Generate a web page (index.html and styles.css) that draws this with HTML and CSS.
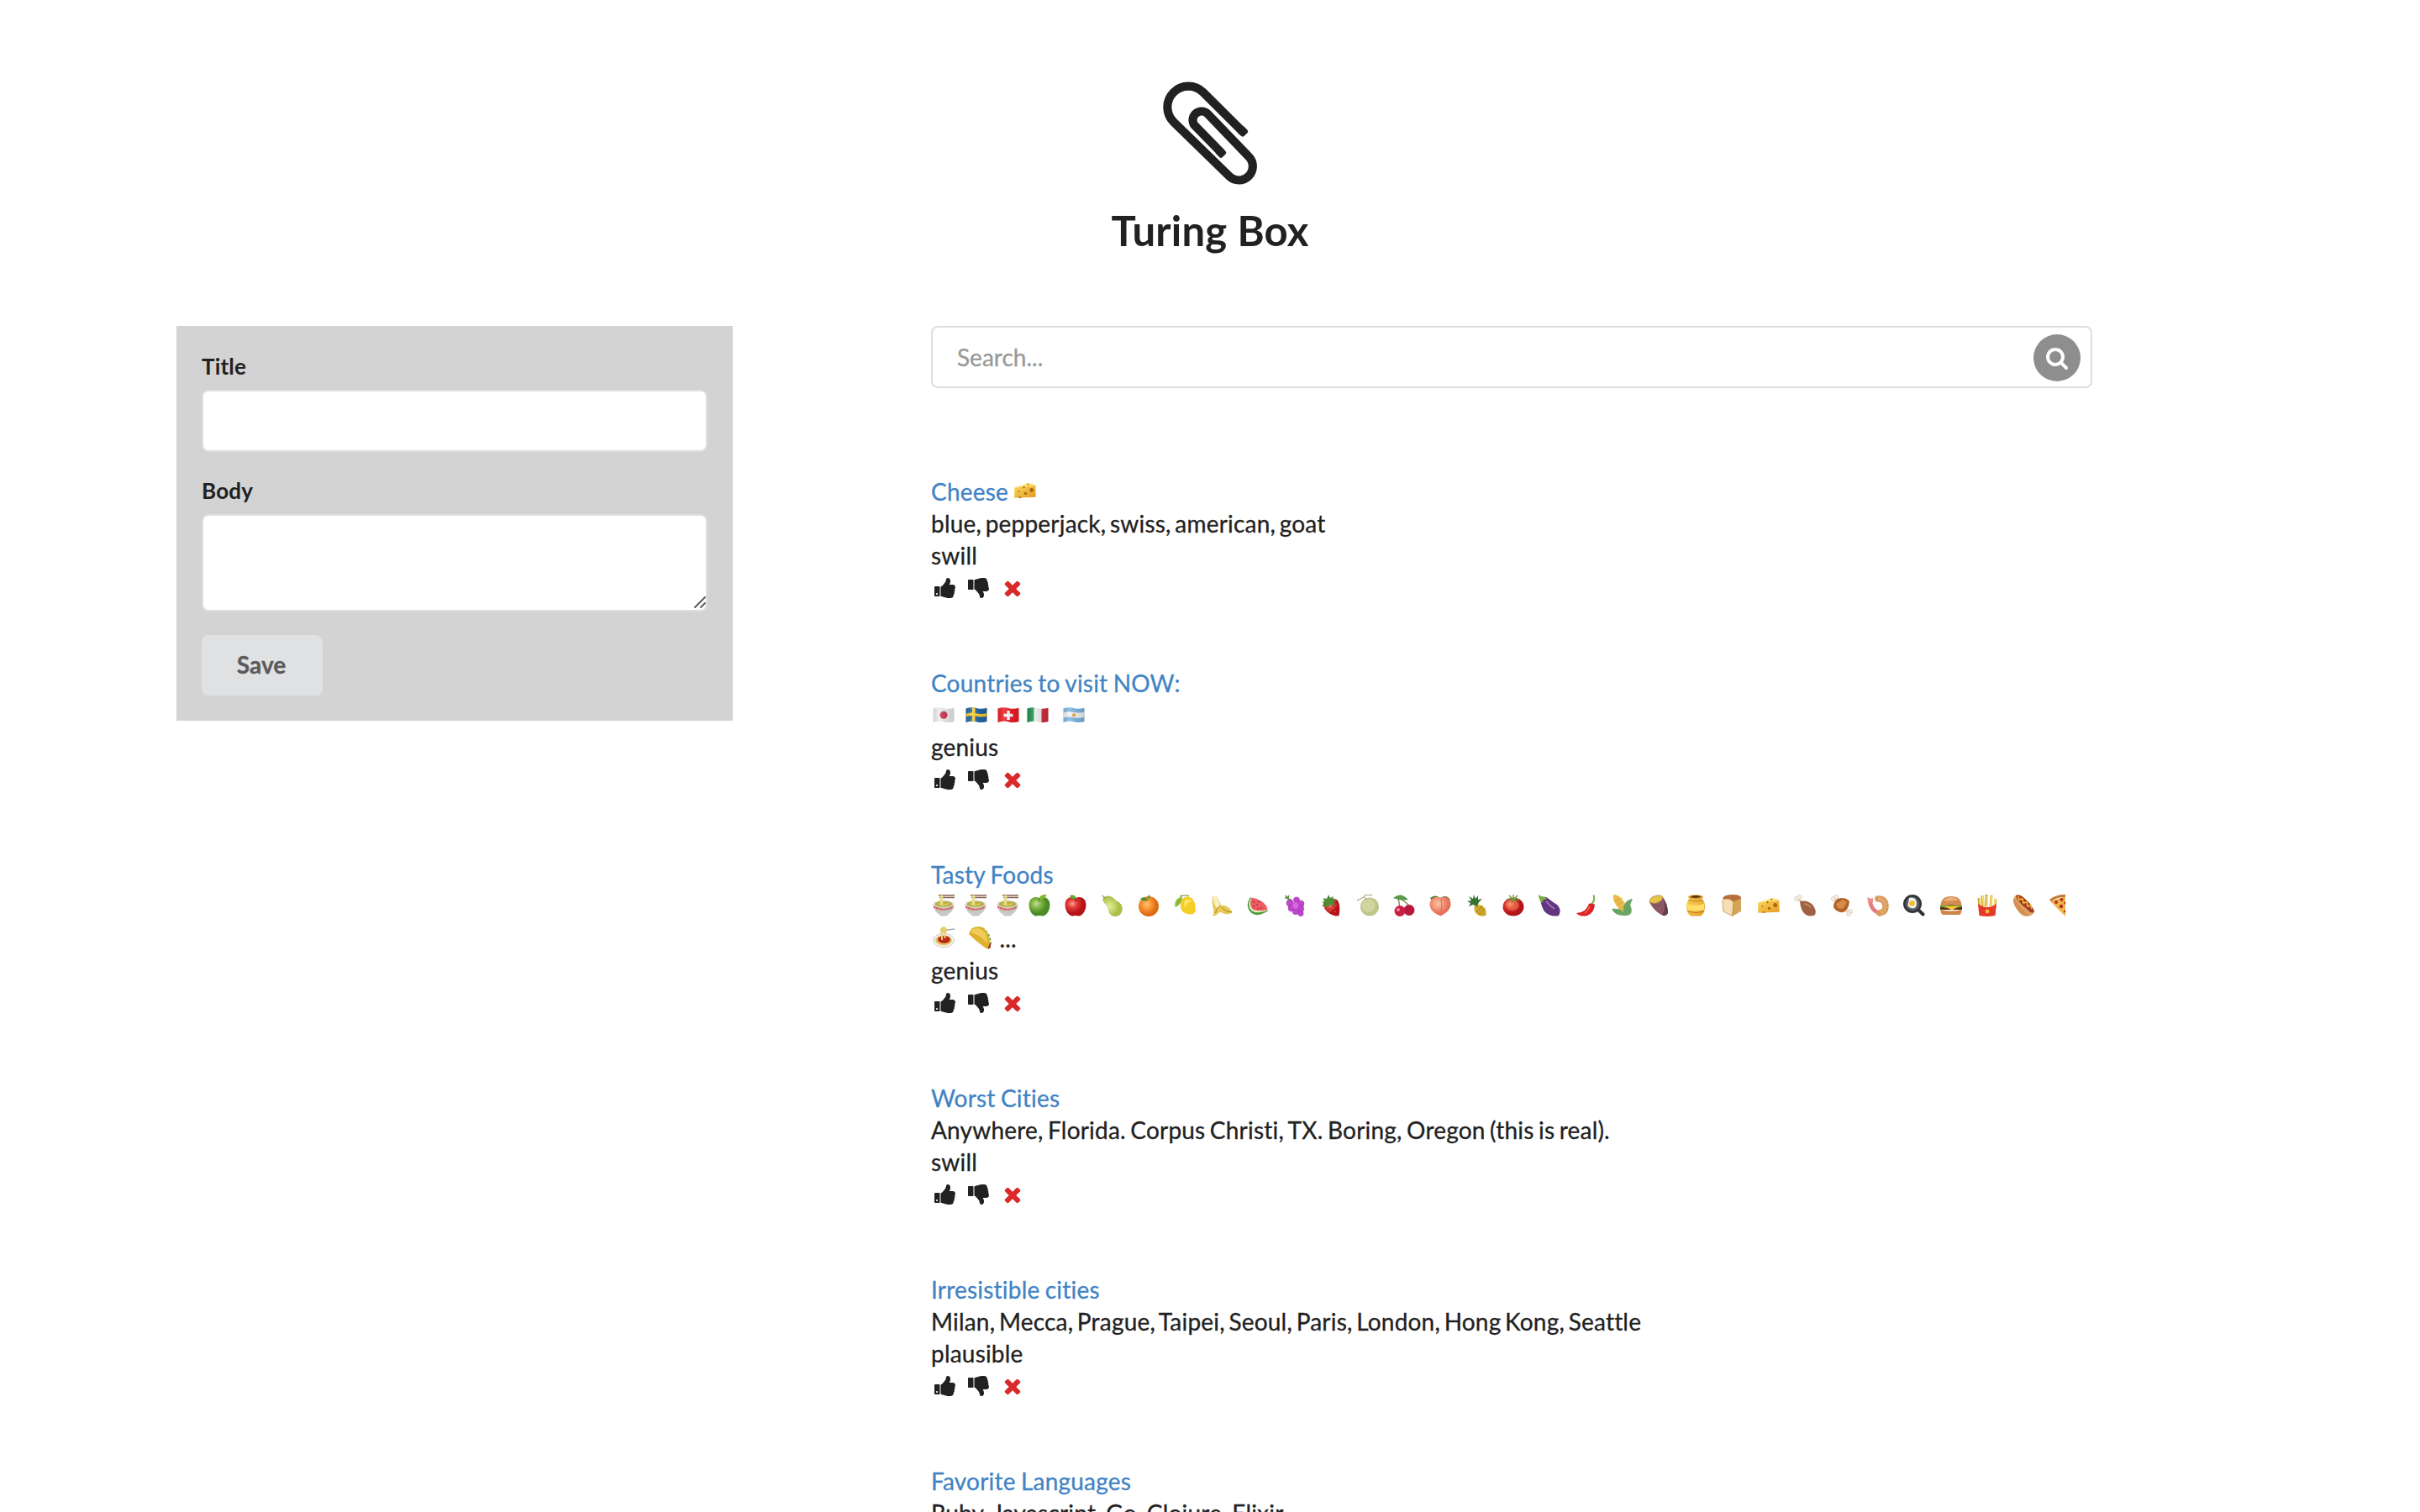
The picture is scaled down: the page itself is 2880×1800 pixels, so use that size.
FILE: index.html
```html
<!DOCTYPE html>
<html lang="en">
<head>
<meta charset="utf-8">
<title>Turing Box</title>
<link rel="stylesheet" href="styles.css">
</head>
<body>
<svg class="defs" aria-hidden="true">
  <defs>
    <linearGradient id="gold" x1="0" x2="1" y1="0" y2="1"><stop offset="0" stop-color="#fbd75c"/><stop offset="1" stop-color="#e39a23"/></linearGradient>
    <radialGradient id="green" cx=".35" cy=".35"><stop offset="0" stop-color="#c3dd94"/><stop offset=".5" stop-color="#7cb342"/><stop offset="1" stop-color="#4c8a26"/></radialGradient>
    <radialGradient id="red" cx=".35" cy=".35"><stop offset="0" stop-color="#ff9d92"/><stop offset=".45" stop-color="#e23b35"/><stop offset="1" stop-color="#b31319"/></radialGradient>
    <radialGradient id="lime" cx=".35" cy=".5"><stop offset="0" stop-color="#e6ee9a"/><stop offset="1" stop-color="#a9bf46"/></radialGradient>
    <radialGradient id="orange" cx=".4" cy=".4"><stop offset="0" stop-color="#ffc078"/><stop offset=".5" stop-color="#fb9430"/><stop offset="1" stop-color="#dc6b15"/></radialGradient>
    <radialGradient id="peach-fill" cx=".4" cy=".35"><stop offset="0" stop-color="#fdc4a2"/><stop offset="1" stop-color="#e8705a"/></radialGradient>
    <linearGradient id="flag-shade" x1="0" x2="1"><stop offset="0" stop-color="#000" stop-opacity=".12"/><stop offset=".3" stop-color="#fff" stop-opacity=".15"/><stop offset=".65" stop-color="#000" stop-opacity=".08"/><stop offset="1" stop-color="#000" stop-opacity=".16"/></linearGradient>
    <clipPath id="wave"><path d="M.5 1.5Q7 -.8 13 1T25.500.8V17Q19 19 13 17.200T.5 18z"/></clipPath>
  </defs>

  <symbol id="thumbs-up" viewBox="0 0 1792 1792"><path d="M256 1344q0-26-19-45t-45-19-45 19-19 45 19 45 45 19 45-19 19-45zm160-512v640q0 26-19 45t-45 19h-288q-26 0-45-19t-19-45v-640q0-26 19-45t45-19h288q26 0 45 19t19 45zm1184 0q0 86-55 149 15 44 15 76 3 76-43 137 17 56 0 117-15 57-54 94 9 112-49 181-64 76-197 78h-129q-66 0-144-15.500t-121.500-29-120.500-39.500q-123-43-158-44-26-1-45-19.500t-19-44.500v-641q0-25 18-43.500t43-20.500q24-2 76-59t101-121q68-87 101-120 18-18 31-48t17.500-48.500 13.500-60.500q7-39 12.500-61t19.500-52 34-50q19-19 45-19 46 0 82.500 10.500t60 26 40 40.500 24 45 12 50 5 45 .5 39q0 38-9.500 76t-19 60-27.500 56q-3 6-10 18t-11 22-8 24h277q78 0 135 57t57 135z"/></symbol>
  <symbol id="thumbs-down" viewBox="0 0 1792 1792"><path d="M256 448q0-26-19-45t-45-19-45 19-19 45 19 45 45 19 45-19 19-45zm160 512v-640q0-26-19-45t-45-19h-288q-26 0-45 19t-19 45v640q0 26 19 45t45 19h288q26 0 45-19t19-45zm1129-149q55 61 55 149-1 78-57.500 135t-134.500 57h-277q4 14 8 24t11 22 10 18q18 37 27 57t19 58.500 10 76.500q0 24-.5 39t-5 45-12 50-24 45-40 40.500-60 26-82.500 10.500q-26 0-45-19-20-20-34-50t-19.500-52-12.500-61q-9-42-13.500-60.500t-17.500-48.500-31-48q-33-33-101-120-49-64-101-121t-76-59q-25-2-43-20.500t-18-43.500v-641q0-26 19-44.500t45-19.500q35-1 158-44 77-26 120.500-39.500t121.500-29 144-15.500h129q133 2 197 78 58 69 49 181 39 37 54 94 17 61 0 117 46 61 43 137 0 32-15 76z"/></symbol>
  <symbol id="remove" viewBox="0 0 1792 1792"><path d="M1490 1322q0 40-28 68l-136 136q-28 28-68 28t-68-28l-294-294-294 294q-28 28-68 28t-68-28l-136-136q-28-28-28-68t28-68l294-294-294-294q-28-28-28-68t28-68l136-136q28-28 68-28t68 28l294 294 294-294q28-28 68-28t68 28l136 136q28 28 28 68t-28 68l-294 294 294 294q28 28 28 68z"/></symbol>

  <symbol id="jp" viewBox="0 0 26 19"><g clip-path="url(#wave)"><path fill="#eee" d="M0 0h26v19H0z"/><circle cx="13" cy="9.300" r="4.500" fill="#d3385a"/><path fill="url(#flag-shade)" d="M0 0h26v19H0z"/></g></symbol>
  <symbol id="se" viewBox="0 0 26 19"><g clip-path="url(#wave)"><path fill="#2667a5" d="M0 0h26v19H0z"/><path fill="#fbd02f" d="M8 0h3.500v19H8zM0 8q7-2.500 13-.8T26 7v3.500q-7 2-13 .3T0 11.500z"/><path fill="url(#flag-shade)" d="M0 0h26v19H0z"/></g></symbol>
  <symbol id="ch" viewBox="0 0 26 19"><g clip-path="url(#wave)"><path fill="#ee1f27" d="M0 0h26v19H0z"/><path fill="#fff" d="M11.300 4h3.500v3.700h3.700v3.500h-3.700v3.700h-3.500v-3.700H7.600V7.700h3.700z"/><path fill="url(#flag-shade)" d="M0 0h26v19H0z"/></g></symbol>
  <symbol id="it" viewBox="0 0 26 19"><g clip-path="url(#wave)"><path fill="#f2f2f2" d="M0 0h26v19H0z"/><path fill="#1d9150" d="M0 0h8.500v19H0z"/><path fill="#d4303f" d="M17.500 0H26v19h-8.500z"/><path fill="url(#flag-shade)" d="M0 0h26v19H0z"/></g></symbol>
  <symbol id="ar" viewBox="0 0 26 19"><g clip-path="url(#wave)"><path fill="#7fb9e6" d="M0 0h26v19H0z"/><path fill="#f5f5f5" d="M0 6.500q7-2 13-.7t13-.3v6q-7 2-13 .7T0 12.500z"/><circle cx="13" cy="9.200" r="2" fill="#e9a93a"/><path fill="url(#flag-shade)" d="M0 0h26v19H0z"/></g></symbol>

  <symbol id="cheese" viewBox="0 0 27 26"><path fill="#fbe27a" d="M0 9.500L16 4q7-.5 10.500 3L2 12z"/><path fill="url(#gold)" d="M.3 9.500L26.500 6.800V21L.3 22z"/><g fill="#a9640f"><circle cx="21.500" cy="12.500" r="2.500"/><circle cx="14" cy="16.500" r="1.600"/><circle cx="5.500" cy="14" r=".9"/><circle cx="12" cy="9" r="1.200"/><path d="M5 22q2.500-3.500 4.500-.2z"/><circle cx="17" cy="5.500" r="1"/></g></symbol>
  <symbol id="ramen" viewBox="0 0 26 26"><path stroke="#8a5f52" stroke-width="1.400" d="M7 1h19M8 3.500h18"/><ellipse cx="13" cy="11.500" rx="12.500" ry="4.800" fill="#e2e2e2"/><path fill="#c8c8c8" d="M.5 11.500C1 19 6 23 8 23.500v1.500q5 1 10 0v-1.500c2-.5 7-4.500 7.500-12q-12.500 8-25 0z"/><path fill="none" stroke="#d95a48" stroke-width="2.200" stroke-dasharray="2 .6" d="M1.500 14.500q11.500 6.500 23 0"/><ellipse cx="13" cy="11.300" rx="10.500" ry="3.500" fill="#bdb03e"/><path fill="none" stroke="#e6db88" stroke-width="3.500" d="M10.500 12V1"/><path fill="none" stroke="#e6db88" d="M7 11q6 3 12-.5"/></symbol>
  <symbol id="green-apple" viewBox="0 0 26 26"><path fill="url(#green)" d="M13 4.500C17 1 25.500 3.500 25.500 12c0 8-5 13.500-8.500 13.500-2 0-2-.6-4-.6s-2 .6-4 .6C5.500 25.500.5 20 .5 12 .5 3.500 9 1 13 4.500z"/><path fill="#83b92d" d="M12.500 5q1-5.500 9-5-1 6-9 5z"/><path stroke="#54702a" d="M13 8L12 4"/></symbol>
  <symbol id="apple" viewBox="0 0 26 26"><path fill="url(#red)" d="M13 4.500C17 1 25.500 3.500 25.500 12c0 8-5 13.500-8.500 13.500-2 0-2-.6-4-.6s-2 .6-4 .6C5.500 25.500.5 20 .5 12 .5 3.500 9 1 13 4.500z"/><path fill="#5cae30" d="M14 5.500Q7.500 6 6 1q7-2 8 4.500z"/><path stroke="#593119" d="M13.500 8L12.500 4"/></symbol>
  <symbol id="pear" viewBox="0 0 26 26"><path fill="url(#lime)" stroke="#9db13f" stroke-width=".5" d="M1.500 5Q3 1.500 9 2q5 1 8 5.500 7.500 2.500 7.500 10Q23.500 25.700 15.500 25.700 9 25 8.500 18 8.500 14 4.500 11 1.500 8 1.500 5z"/><path stroke="#806131" fill="none" d="M4 4L.5.8"/></symbol>
  <symbol id="tangerine" viewBox="0 0 26 26"><circle cx="13" cy="14" r="12" fill="url(#orange)"/><path fill="#4d9138" d="M11 6q1-4.500 3-6 2 3-3 6zM12 6.500Q7 9.500 3 5q5-4 9 1.500z"/></symbol>
  <symbol id="lemon" viewBox="0 0 26 26"><path fill="#f5cd26" d="M9 5Q14 1 20 4q5 5 4.500 12l.5 4-3 3q-7 1.500-12-2Q4 14 9 5z"/><path fill="#fce76a" d="M12 7q5-3 8 1-6 1-7 8-3-4-1-9z"/><path fill="#8cb934" d="M9 2Q-1 5 .5 15 9 12 9 2z"/><path fill="none" stroke="#5e8d23" stroke-width="1.200" d="M6 2q8-2 11 0"/></symbol>
  <symbol id="banana" viewBox="0 0 26 26"><path fill="#e6c955" d="M2 2l5 0q4 6 5 11 7-2 14 8-6 4-12 1-3-2-5 0-3 4-7 3.500 2-3 1-9Q1 11 2 2z"/><path fill="#f8efc0" d="M2.500 2Q3 11 7 16l4.500-2Q9 5 6 1.500z"/><path fill="none" stroke="#a8832b" d="M12 13q-5 2-6.500 9M13 15q3 5 12 6"/></symbol>
  <symbol id="watermelon" viewBox="0 0 26 26"><path fill="#4d9d3f" d="M4 3Q-2 12 3 19.500 11 29 25.500 19z"/><path fill="#eef0ca" d="M5 3.500Q0 12 4.500 18T25 18.500z"/><path fill="#ef5b62" d="M5.500 3.500Q2.500 12 6 16.500T24.500 18q-1-6-7-10t-12-4.500z"/><g fill="#69282d"><circle cx="8" cy="9" r=".8"/><circle cx="8" cy="14" r=".8"/><circle cx="12" cy="12" r=".8"/><circle cx="13" cy="17" r=".8"/><circle cx="17" cy="16" r=".8"/><circle cx="14" cy="8.500" r=".8"/></g></symbol>
  <symbol id="grapes" viewBox="0 0 26 26"><path stroke="#5c9338" stroke-width="1.600" fill="none" d="M2 1l3 4 5 2M6 1L4 5M1 4h5"/><g fill="#bf46ca" stroke="#9b2daa" stroke-width=".5"><circle cx="15" cy="6.500" r="3.600"/><circle cx="7" cy="10" r="4"/><circle cx="20" cy="11" r="4"/><circle cx="9" cy="16" r="4"/><circle cx="20" cy="17" r="3.800"/><circle cx="14" cy="20" r="3.800"/><circle cx="20" cy="22.500" r="3.200"/><circle cx="14" cy="13" r="4.200" fill="#d46add"/></g></symbol>
  <symbol id="strawberry" viewBox="0 0 26 26"><path fill="url(#red)" d="M4 10Q12 2 20 6q5 5 2.500 19-5 1.500-12-3T4 10z"/><path fill="#4d8b35" d="M2 9l3 1-3 4 5-1 1 4 4-5 6 1-2-4 4-2-5-2 1-3-4 2-2-4-2 5-4-1 1 4z"/><g fill="#ffd9a0"><circle cx="15" cy="16" r=".6"/><circle cx="19" cy="13" r=".6"/><circle cx="18" cy="20" r=".6"/><circle cx="12" cy="19" r=".6"/></g></symbol>
  <symbol id="melon" viewBox="0 0 26 26"><circle cx="15" cy="14.500" r="11" fill="#c0c58c"/><circle cx="13.500" cy="13" r="8" fill="#d3d7a2" opacity=".8"/><path fill="none" stroke="#aba27a" stroke-width="1.200" d="M0 7Q7 4 9 1.500T18 1M8 2l3 4"/></symbol>
  <symbol id="cherries" viewBox="0 0 26 26"><path fill="none" stroke="#6b7f2c" stroke-width="1.200" d="M7 15q1-6-2-12 8 4 14 10"/><path fill="#5a9a4c" d="M0 4Q9-4 18 6 9 8 0 4z"/><circle cx="19" cy="18.500" r="6.500" fill="#b9173c"/><circle cx="8" cy="19.500" r="6.500" fill="#c91f44"/><circle cx="6" cy="18" r="2" fill="#ee8b9c"/></symbol>
  <symbol id="peach" viewBox="0 0 26 26"><path fill="#4b7a38" d="M1 4q6-5 12 0 7-5 12 2l-5 1-17 0z"/><path fill="url(#peach-fill)" d="M13.500 4C18 1 26 4 25.500 12 25 19 18 23 13.500 25.500 8 23 1 20 .5 12 .5 4 9 1 13.500 4z"/><path fill="none" stroke="#d9705c" d="M13.500 4q3 9-.5 18"/></symbol>
  <symbol id="pineapple" viewBox="0 0 26 26"><path fill="#d5ac2c" d="M10 13q6-3 11 2 4 5 2 10-6 2-11-2-4-5-2-10z"/><path stroke="#957118" stroke-width=".6" d="M12 14l10 10M16 13l7 8M12 19l7 6M20 13l-8 8M23 16l-8 8"/><path fill="#35722f" d="M13 14L8 12l-5 2 2-4-4-2 5-1-3-5 5 3 1-5 2 5 3-4v5l5-1-4 4z"/></symbol>
  <symbol id="tomato" viewBox="0 0 26 26"><ellipse cx="13" cy="14.500" rx="12.500" ry="11" fill="url(#red)"/><ellipse cx="12" cy="13" rx="8" ry="6" fill="#f68a55" opacity=".45"/><path fill="none" stroke="#6c9c3c" stroke-width="1.400" d="M13 6L8 1M13 6V0M13 6l5-5M5 6q7-2 16 0M13 6l-2 4M13 6l4 3"/></symbol>
  <symbol id="eggplant" viewBox="0 0 26 26"><path fill="#63357f" d="M2 6q5-6 10-1 5 4 10 7 6 6 2 13-9 2-16-4-4-4-6-15z"/><path fill="none" stroke="#a27abc" stroke-width="1.800" d="M9 8q5 6 10 9"/><path fill="#7eae46" d="M0 0l3 2q5 0 7 3l-4 1-2 4Q0 6 0 0z"/></symbol>
  <symbol id="pepper" viewBox="0 0 26 26"><path fill="#db2428" d="M16 11q4-2 7 1-1 10-9 13-9 2-13-3 11 0 15-11z"/><path fill="none" stroke="#ff8c83" d="M17 14q-2 6-6 8"/><path fill="none" stroke="#7ead4a" stroke-width="2" d="M19.500 11q4-4 2-10.500"/></symbol>
  <symbol id="corn" viewBox="0 0 26 26"><path fill="#eec050" d="M2 0q8 0 13 9 4 6 2 12-6 0-10-6Q1 8 2 0z"/><path stroke="#cc922a" stroke-width=".5" d="M4 1l12 16M2 4l12 14M3 8l10-4M6 13l8-5M9 17l7-4"/><path fill="#68a565" d="M14 21q-3-5-14-4 4 8 14 8 14 1 8-13l3-7q-12 2-11 16z"/></symbol>
  <symbol id="potato" viewBox="0 0 26 26"><path fill="#8a5765" d="M1 9L17 3q6 8 6 19-3 5-8 2Q6 19 1 9z"/><path fill="#623d49" d="M18 6q5 8 5 16-3 5-7 2 5-6 2-18z"/><path fill="#e5c348" stroke="#a7793d" stroke-width=".7" d="M1 9q0-7 10-8 8 0 5 5Q9 13 1 9z"/></symbol>
  <symbol id="honey" viewBox="0 0 26 26"><path fill="url(#gold)" d="M5 2h16v4q3 2 3 8 0 8-5 11.500H7Q2 22 2 14q0-6 3-8z"/><ellipse cx="13" cy="3" rx="9" ry="2.800" fill="#e0a030"/><ellipse cx="13" cy="2.500" rx="6" ry="1.500" fill="#5a360f"/><path fill="#ffdf68" d="M3 11q10 3 20 0v7q-10 3-20 0z"/><path fill="none" stroke="#b16d13" stroke-width=".8" d="M4 7q9 2 18 0M3 20q10 3 20 0"/></symbol>
  <symbol id="bread" viewBox="0 0 26 26"><path fill="#d4a457" d="M13 6L24 4V20L13 26z"/><path fill="#b76f3c" d="M2 5Q3 0 14 0t10 5L14 8z"/><path fill="#f6e0b2" stroke="#bd7c42" stroke-width=".7" d="M2 10Q1 5 7 5t8 5l-1.500 15.500L3 20z"/></symbol>
  <symbol id="drumstick" viewBox="0 0 26 26"><path stroke="#e0cfbd" stroke-width="3" d="M3 3l10 10"/><g fill="#f5ece2" stroke="#cdb8a2" stroke-width=".5"><circle cx="3" cy="5" r="2.600"/><circle cx="6.500" cy="2.800" r="2.600"/></g><path fill="#9f6142" d="M7 8q9-2 15 4 6 8 2.500 12.500-8 3-13-3Q8 18 7 8z"/><path fill="none" stroke="#c58d6a" stroke-width="1.600" d="M12 11q5 0 8 5"/></symbol>
  <symbol id="meat" viewBox="0 0 26 26"><path stroke="#eee1d3" stroke-width="4" d="M4 4l19 19"/><g fill="#f5ece2" stroke="#cdb8a2" stroke-width=".5"><circle cx="3" cy="5" r="2.600"/><circle cx="6.500" cy="2.800" r="2.600"/><circle cx="23.500" cy="20" r="2.500"/><circle cx="21" cy="23" r="2.500"/></g><path fill="#b26327" d="M3 15Q3 5 12 4q7 0 10 4-1 10-7 13-8 1-12-6z"/><path fill="#d48c48" d="M6 11l8-5 5 3-5 8-6-1z"/></symbol>
  <symbol id="shrimp" viewBox="0 0 26 26"><path fill="none" stroke="#e57b80" stroke-width="4.500" d="M3 5q1 14 12 17"/><path fill="#ea8b8b" d="M0 3l4 2 3-1v6H2z"/><path fill="none" stroke="#d89a5c" stroke-width="7.500" stroke-linecap="round" d="M13 5q9 0 9 9 0 7-7 8"/><path fill="none" stroke="#e4b077" stroke-width="4" stroke-dasharray="2 1.500" d="M13 5q9 0 8.500 9 0 6-6 8"/></symbol>
  <symbol id="pan" viewBox="0 0 26 26"><path stroke="#2f3338" stroke-width="4" stroke-linecap="round" d="M17 17l6.500 6.500"/><circle cx="11" cy="11" r="11" fill="#32363b"/><circle cx="11" cy="11" r="8.300" fill="#565c62"/><path fill="#f1f1ec" d="M7 4q8-2 9 6 0 8-7 6-5-2-3-6z"/><circle cx="10.500" cy="10.500" r="3.300" fill="#f4bc2a"/></symbol>
  <symbol id="burger" viewBox="0 0 26 26"><path fill="#d48b50" d="M.5 13Q1 2 13 2t12.500 11z"/><path fill="#eab07a" d="M4 8q3-5 9-5 6 0 8 4z"/><path fill="#5b2f1a" d="M0 14q13-3 26 0v4H0z"/><path fill="#7aa52d" d="M0 13h26v1.500q-13 3-26 0z"/><path fill="#fac931" d="M5 14h17l-8 4.500z"/><path fill="#cf8546" d="M.5 18q12.500 3 25 0 0 6-4 6h-17q-4 0-4-6z"/></symbol>
  <symbol id="fries" viewBox="0 0 26 26"><path stroke="#c9a335" stroke-width="3" d="M4 14L3 4M8 14L7 1M12 14V0M17 14l1-13M22 14l1-9"/><path stroke="#f5dd71" stroke-width="2" d="M5 15L4 4M9 14L7.500 1M13 14V1M17 14l1-12M21 14l2-9"/><path fill="#e5392a" d="M2 11q11 8 22 0l-1.500 14q-10 2-19 0z"/><circle cx="13" cy="20" r="2.400" fill="#f5bb36"/></symbol>
  <symbol id="hotdog" viewBox="0 0 26 26"><path fill="#dfa263" d="M1 3q3-5 9-1 9 7 15 18-1 4-5 5Q11 29 4 17-1 8 1 3z"/><path fill="#a63d25" d="M3 1q5-2 12 5 8 7 10 14-3 4-8-2Q4 8 3 1z"/><path fill="#d68e52" d="M0 5q3 1 8 9 6 7 12 11-9 1-16-8-5-7-4-12z"/><path fill="none" stroke="#f4c330" stroke-width="1.500" d="M6 2l1 4 4-1 1 5 4-1 1 5 4-1 1 4"/></symbol>
  <symbol id="pizza" viewBox="0 0 19 26"><path fill="#edb550" d="M1 8L19 2v24z"/><path fill="none" stroke="#c47836" stroke-width="3" d="M1 7Q9 1 19 1.500"/><g fill="#bc2d20"><circle cx="8" cy="9" r="2"/><circle cx="14.500" cy="6" r="2"/><circle cx="14" cy="14" r="2.200"/><circle cx="18.500" cy="10" r="1.500"/><circle cx="18.500" cy="20" r="1.500"/></g></symbol>
  <symbol id="spaghetti" viewBox="0 0 26 26"><ellipse cx="13" cy="16.500" rx="12.500" ry="8.500" fill="#f2f2ee" stroke="#bbb" stroke-width=".7"/><ellipse cx="13" cy="16.500" rx="10" ry="6" fill="#e6c765"/><ellipse cx="13.500" cy="15.500" rx="7.500" ry="4.500" fill="#b92a18"/><path stroke="#aaa" d="M14 4q6 0 12-1" fill="none" stroke-width="1.300"/><path fill="none" stroke="#ead17d" stroke-width="2" d="M11 16V3M14.500 14V3"/><path fill="#e6cc74" d="M9 3q4-6 8 0v4H9z"/></symbol>
  <symbol id="taco" viewBox="0 0 27 27"><path fill="#f4efdc" stroke="#6ea83a" stroke-width="1.800" stroke-dasharray="3 2" d="M16 2q10 6 10 20l-4 2z"/><path fill="#983f26" d="M21 22l5-3v6l-3 2z"/><path fill="#deb02d" d="M0 9Q2 0 12 0q8 1 11 10l2 10-3 7Q9 18 0 9z"/><path fill="#efcc58" d="M2 7q3-6 10-5 7 3 9 9l1 9Q14 10 2 7z"/></symbol>
</svg>

<header class="masthead">
  <svg class="clip" viewBox="312 80 338 370">
    <path fill="none" stroke="#212121" stroke-width="30.500" d="M600 263L455 119A74 74 0 0 0 349 225L548 419A49 49 0 0 0 618 349L471 196A30 30 0 0 0 427 240L520 335"/>
    <g fill="#212121"><rect x="581" y="243.500" width="31" height="30.500" rx="7" transform="rotate(45 596.500 258.800)"/><rect x="503" y="319.500" width="31" height="30.500" rx="7" transform="rotate(45 518.500 334.800)"/></g>
  </svg>
  <h1 class="brand">Turing Box</h1>
</header>

<main class="columns">
  <form class="panel">
    <label class="label" for="title">Title</label>
    <input class="field" id="title" type="text">
    <label class="label" for="body">Body</label>
    <div class="area">
      <textarea class="field tall" id="body"></textarea>
      <svg class="grip" viewBox="0 0 14 14"><path stroke="#555" stroke-width="1.800" stroke-linecap="round" d="M1 13L13 1M8 13l5-5"/></svg>
    </div>
    <button class="save" type="button">Save</button>
  </form>

  <section class="feed">
    <div class="search">
      <input class="query" type="text" placeholder="Search...">
      <span class="go"><svg viewBox="0 0 1792 1792"><path fill="#fff" d="M1216 832q0-185-131.500-316.500t-316.500-131.500-316.500 131.500-131.500 316.500 131.500 316.500 316.500 131.500 316.500-131.500 131.500-316.500zm512 832q0 52-38 90t-90 38q-54 0-90-38l-343-342q-179 124-399 124-143 0-273.500-55.500t-225-150-150-225-55.500-273.500 55.500-273.500 150-225 225-150 273.500-55.500 273.500 55.500 225 150 150 225 55.500 273.500q0 220-124 399l343 343q37 37 37 90z"/></svg></span>
    </div>

    <article class="idea">
      <h2 class="name">Cheese <svg class="emoji inline"><use href="#cheese"/></svg></h2>
      <p class="line">blue, pepperjack, swiss, american, goat</p>
      <p class="line">swill</p>
      <div class="votes"><svg><use href="#thumbs-up"/></svg><svg class="down"><use href="#thumbs-down"/></svg><svg class="x"><use href="#remove"/></svg></div>
    </article>

    <article class="idea">
      <h2 class="name">Countries to visit NOW:</h2>
      <div class="flags"><svg><use href="#jp"/></svg><svg><use href="#se"/></svg><svg><use href="#ch"/></svg><svg class="close"><use href="#it"/></svg><svg class="apart"><use href="#ar"/></svg></div>
      <p class="line">genius</p>
      <div class="votes"><svg><use href="#thumbs-up"/></svg><svg class="down"><use href="#thumbs-down"/></svg><svg class="x"><use href="#remove"/></svg></div>
    </article>

    <article class="idea">
      <h2 class="name">Tasty Foods</h2>
      <div class="foods">
        <svg class="emoji near"><use href="#ramen"/></svg><svg class="emoji near"><use href="#ramen"/></svg><svg class="emoji near"><use href="#ramen"/></svg><svg class="emoji"><use href="#green-apple"/></svg><svg class="emoji"><use href="#apple"/></svg><svg class="emoji"><use href="#pear"/></svg><svg class="emoji"><use href="#tangerine"/></svg><svg class="emoji"><use href="#lemon"/></svg><svg class="emoji"><use href="#banana"/></svg><svg class="emoji"><use href="#watermelon"/></svg><svg class="emoji"><use href="#grapes"/></svg><svg class="emoji"><use href="#strawberry"/></svg><svg class="emoji"><use href="#melon"/></svg><svg class="emoji"><use href="#cherries"/></svg><svg class="emoji"><use href="#peach"/></svg><svg class="emoji"><use href="#pineapple"/></svg><svg class="emoji"><use href="#tomato"/></svg><svg class="emoji"><use href="#eggplant"/></svg><svg class="emoji"><use href="#pepper"/></svg><svg class="emoji"><use href="#corn"/></svg><svg class="emoji"><use href="#potato"/></svg><svg class="emoji"><use href="#honey"/></svg><svg class="emoji"><use href="#bread"/></svg><svg class="emoji"><use href="#cheese"/></svg><svg class="emoji"><use href="#drumstick"/></svg><svg class="emoji"><use href="#meat"/></svg><svg class="emoji"><use href="#shrimp"/></svg><svg class="emoji"><use href="#pan"/></svg><svg class="emoji"><use href="#burger"/></svg><svg class="emoji"><use href="#fries"/></svg><svg class="emoji"><use href="#hotdog"/></svg><svg class="emoji pizza"><use href="#pizza"/></svg>
      </div>
      <div class="foods"><svg class="emoji"><use href="#spaghetti"/></svg><svg class="emoji taco"><use href="#taco"/></svg><span class="more">...</span></div>
      <p class="line">genius</p>
      <div class="votes"><svg><use href="#thumbs-up"/></svg><svg class="down"><use href="#thumbs-down"/></svg><svg class="x"><use href="#remove"/></svg></div>
    </article>

    <article class="idea">
      <h2 class="name">Worst Cities</h2>
      <p class="line long">Anywhere, Florida. Corpus Christi, TX. Boring, Oregon (this is real).</p>
      <p class="line">swill</p>
      <div class="votes"><svg><use href="#thumbs-up"/></svg><svg class="down"><use href="#thumbs-down"/></svg><svg class="x"><use href="#remove"/></svg></div>
    </article>

    <article class="idea">
      <h2 class="name">Irresistible cities</h2>
      <p class="line">Milan, Mecca, Prague, Taipei, Seoul, Paris, London, Hong Kong, Seattle</p>
      <p class="line">plausible</p>
      <div class="votes"><svg><use href="#thumbs-up"/></svg><svg class="down"><use href="#thumbs-down"/></svg><svg class="x"><use href="#remove"/></svg></div>
    </article>

    <article class="idea">
      <h2 class="name">Favorite Languages</h2>
      <p class="line long">Ruby, Javascript, Go, Clojure, Elixir</p>
    </article>
  </section>
</main>
</body>
</html>
```
FILE: styles.css
```css
* { box-sizing: border-box; }

html, body { margin: 0; height: 1800px; overflow: hidden; background: #fff; }

body {
  font-family: Lato, "Liberation Sans", sans-serif;
  font-size: 28px;
  line-height: 38px;
  color: #212121;
  font-variant-ligatures: none;
  letter-spacing: .2px;
  -webkit-text-stroke: .3px;
}

svg { display: block; flex: none; }
.defs { position: absolute; width: 0; height: 0; }

.masthead {
  display: flex;
  flex-direction: column;
  align-items: center;
  height: 388px;
  padding-top: 97px;
}
.clip { width: 113px; height: 123px; }
.brand { margin: 23px 0 0; font-size: 49px; font-weight: 700; line-height: 62px; -webkit-text-stroke: 0; }

.columns {
  display: flex;
  align-items: flex-start;
  gap: 236px;
  padding-left: 210px;
}

.panel {
  display: flex;
  flex-direction: column;
  width: 662px;
  height: 470px;
  padding: 29px 30px 30px;
  background: #d3d3d3;
}
.label { margin-bottom: 9px; font-size: 26px; font-weight: 700; line-height: 38px; -webkit-text-stroke: 0; }
.field {
  display: block;
  width: 602px;
  height: 74px;
  margin: 0 0 27px;
  border: 2px solid #dededf;
  border-radius: 8px;
  background: #fff;
}
.tall { height: 116px; margin-bottom: 28px; resize: none; }
.area { position: relative; }
.grip { position: absolute; right: 2px; top: 98px; width: 14px; height: 14px; }
.save {
  width: 144px;
  height: 72px;
  padding: 0 2px 2px 0;
  border: 0;
  border-radius: 8px;
  background: #e0e1e2;
  color: #5a5a5a;
  font: 700 28px Lato, sans-serif;
}

.feed { width: 1382px; }
.search {
  display: flex;
  align-items: center;
  height: 74px;
  margin-bottom: 104px;
  padding: 0 12px 0 29px;
  border: 2px solid #dedede;
  border-radius: 8px;
}
.query { flex: 1; padding: 0; border: 0; outline: 0; background: none; font: 28px Lato, sans-serif; }
.query::placeholder { color: #999; opacity: 1; }
.go {
  display: flex;
  align-items: center;
  justify-content: center;
  width: 56px;
  height: 56px;
  margin-top: 2px;
  border-radius: 50%;
  background: #8e8e8e;
}
.go svg { width: 28px; height: 28px; }

.idea { margin-bottom: 76px; }
.name { display: flex; height: 38px; margin: 0; color: #4183c4; font-size: 28px; font-weight: 400; word-spacing: -1px; white-space: pre; }
.line { height: 38px; margin: 0; white-space: nowrap; word-spacing: -2.700px; }
.long { word-spacing: -1.900px; }

.votes { display: flex; height: 38px; padding: 6px 0 0 4px; fill: #212121; }
.votes svg { width: 28px; height: 28px; margin-right: 12px; }
.votes .x { fill: #db2828; margin-left: -1px; }

.emoji { width: 26px; height: 26px; margin: 5px 17.400px 0 0; }
.inline { margin: 5px 0 0 1px; }
.near { margin-right: 12px; }
.foods { display: flex; height: 38px; padding-left: 2px; }
.pizza { width: 19px; margin-right: 0; }
.taco { width: 27px; height: 27px; margin-right: 9px; }

.flags { display: flex; height: 38px; padding: 10px 0 0 2px; }
.flags svg { width: 26px; height: 19px; margin-right: 12.500px; }
.flags .close { margin-left: -4px; }
.flags .apart { margin-left: 5px; }
```
